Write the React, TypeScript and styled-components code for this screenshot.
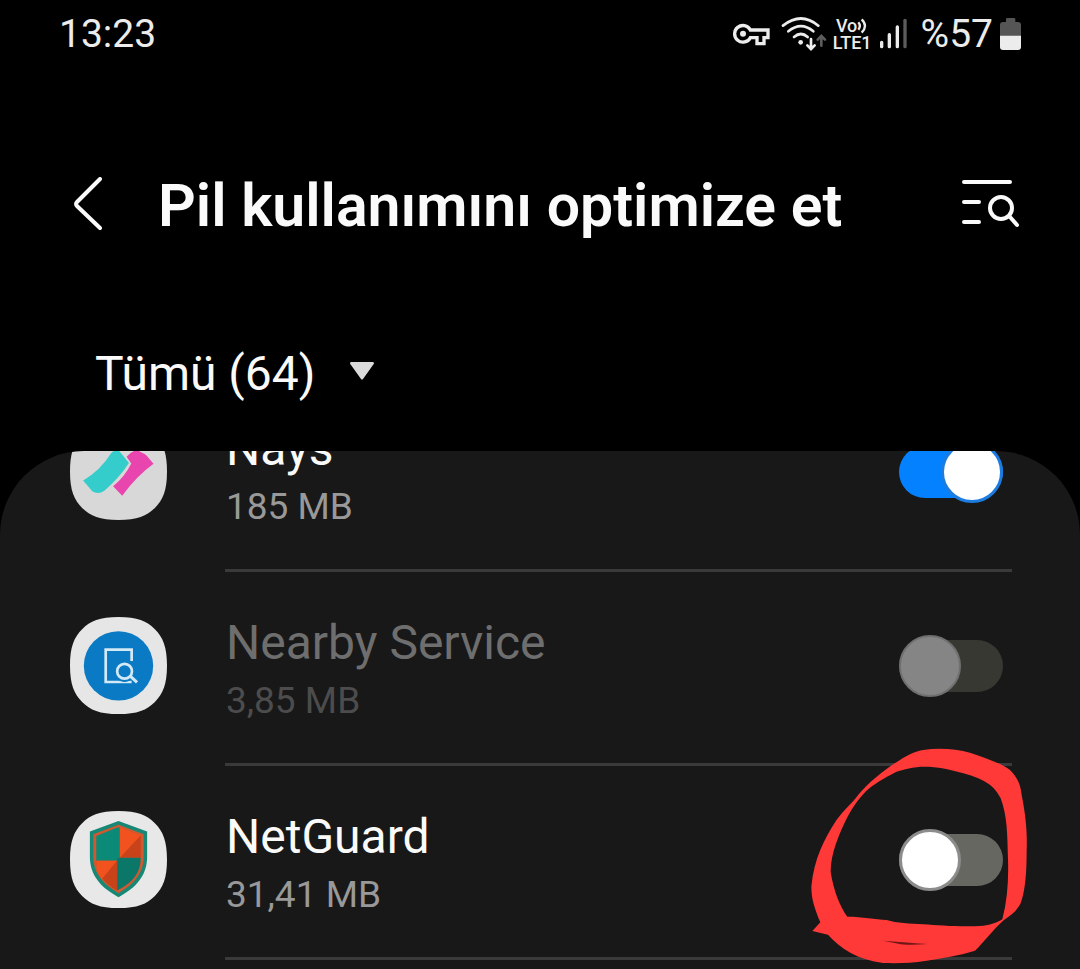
import React, {useState} from 'react';
import styled, {createGlobalStyle} from 'styled-components';

const SQUIRCLE = 'M144 0C200 0 228 12 252 36S288 88 288 144S276 228 252 252S200 288 144 288S60 276 36 252S0 200 0 144S12 60 36 36S88 0 144 0Z';

const NaysIcon = () => (
    <AppIcon viewBox="0 0 288 288" aria-hidden="true">
        <path d={SQUIRCLE} fill="#d8d8d8"/>
        <path d="M168 100Q192 74 208 85Q222 91 228 97L248 121Q198 157 155 216L128 188Q162 160 182 120Z" fill="#e845ae"/>
        <path d="M39 171Q90 141 122 90Q134 76 147 84L175 119Q144 166 102 201Q84 213 66 203Z" fill="#34cdcb"/>
    </AppIcon>
);

const NearbyIcon = () => (
    <AppIcon viewBox="0 0 288 288" aria-hidden="true">
        <path d={SQUIRCLE} fill="#e6e6e6"/>
        <circle cx="144" cy="145" r="103" fill="#0a7ac4"/>
        <g fill="none" stroke="#d3e9f5" strokeWidth="8">
            <path d="M183 131V97H106V193H183"/>
            <circle cx="162" cy="161" r="28" fill="#0a7ac4" stroke="#0a7ac4"/>
            <circle cx="162" cy="161" r="22"/>
            <path d="M178 175L199 194" strokeWidth="9"/>
        </g>
    </AppIcon>
);

const NetGuardIcon = () => (
    <AppIcon viewBox="0 0 288 288" aria-hidden="true">
        <path d={SQUIRCLE} fill="#e8e8e8"/>
        <path d="M144 30L229 61V136C229 190 198 227 144 256C90 227 59 190 59 136V61Z" fill="#188876"/>
        <path d="M144 41L219 69V136C219 184 190 217 144 244C98 217 69 184 69 136V69Z" fill="#cf5930"/>
        <path d="M78 147H140V236C100 215 78 185 78 147Z" fill="#c9431a"/>
        <path d="M78 147H140L94 203C82 185 78 168 78 147Z" fill="#f2521d"/>
        <path d="M148 49V139H140V147H78V74L140 49Z" fill="#0b8a78"/>
        <path d="M148 49V139L210 73Z" fill="#f2521d"/>
        <path d="M210 73V139H148Z" fill="#c9431a"/>
        <path d="M140 139H210C210 183 188 212 140 236Z" fill="#0a7768"/>
    </AppIcon>
);

const apps = [
    {id: 'nays', name: 'Nays', size: '185 MB', enabled: true, Icon: NaysIcon},
    {id: 'nearby', name: 'Nearby Service', size: '3,85 MB', enabled: false, disabled: true, Icon: NearbyIcon},
    {id: 'netguard', name: 'NetGuard', size: '31,41 MB', enabled: false, marked: true, Icon: NetGuardIcon},
];

const StatusIcons = () => (
    <StatusGroup>
        <StatusIcon $width={43} viewBox="36 48 129 108" aria-hidden="true">
            <path
                d="M91 90A25 25 0 1 0 91 113H111V131H132V113H144V90Z"
                fill="none" stroke="#ececec" strokeWidth="10"
            />
            <circle cx="69" cy="101" r="9" fill="#ececec"/>
        </StatusIcon>
        <StatusIcon $width={46} viewBox="186 48 138 108" aria-hidden="true">
            <g fill="none" stroke="#ececec" strokeWidth="8" strokeLinecap="round">
                <path d="M192 77Q246 34 298 77"/>
                <path d="M208 94Q246 63 283 94"/>
                <path d="M225 111Q246 93 266 111"/>
                <path d="M276 117V145M265 136L276 147L287 136"/>
                <path d="M307 137V109M296 119L307 108L318 119" stroke="#5c5c5c"/>
            </g>
            <circle cx="245" cy="127" r="7" fill="#ececec"/>
        </StatusIcon>
        <Network>
            <NetworkLine>
                Vo
                <svg width="11" height="18" viewBox="0 0 33 54" aria-hidden="true">
                    <path d="M4 16Q13 27 4 38M14 7Q34 27 14 47" fill="none" stroke="#ececec" strokeWidth="7"/>
                </svg>
            </NetworkLine>
            <NetworkLine>LTE1</NetworkLine>
        </Network>
        <StatusIcon $width={37} viewBox="474 48 111 108" aria-hidden="true">
            <g stroke="#ececec" strokeWidth="10" strokeLinecap="round">
                <path d="M485 127V140M508 104V140M532 81V140"/>
                <path d="M555 61V140" stroke="#5c5c5c"/>
            </g>
        </StatusIcon>
        <span>%57</span>
        <StatusIcon $width={23} viewBox="837 48 69 108" aria-hidden="true">
            <path d="M858 57Q858 54 862 54H882Q886 54 886 57V66H894Q903 66 903 75V108H840V75Q840 66 849 66H858Z" fill="#555"/>
            <path d="M840 107H903V141Q903 150 894 150H849Q840 150 840 141Z" fill="#ececec"/>
        </StatusIcon>
    </StatusGroup>
);

// hand drawn ring around a switch
const Scribble = () => (
    <ScribbleSvg viewBox="0 0 870 717" aria-hidden="true">
        <path
            fillRule="evenodd"
            fill="#ff3838"
            d="M400 60C450 52 500 58 540 68C580 82 630 97 660 120C685 145 692 168 695 195C708 260 712 310 710 360C710 430 706 480 692 520C678 546 662 556 642 570C606 602 582 637 555 662C510 676 460 684 410 692C360 700 320 700 280 699C205 690 150 655 114 614L67 603L91 577C76 540 64 510 64 470C72 385 104 325 138 272C165 234 185 222 205 194C235 158 290 113 330 90C350 76 375 64 400 60ZM405 110C370 110 340 118 318 126C280 146 250 163 228 184C200 213 190 230 172 262C150 305 122 370 122 425C130 480 150 530 172 560C220 560 255 568 290 570C320 580 360 580 400 583C450 587 530 592 580 587C605 584 620 578 637 568C652 510 656 450 654 390C652 310 652 260 632 205C608 155 560 142 520 130C480 118 440 110 405 110Z"
        />
        <path d="M280 632Q335 636 412 642Q350 647 325 641Z" fill="#6e1717"/>
    </ScribbleSvg>
);

function App() {
    const [enabled, setEnabled] = useState<Record<string, boolean>>(
        Object.fromEntries(apps.map(app => [app.id, app.enabled]))
    );

    const toggle = (id: string) => setEnabled(prev => ({...prev, [id]: !prev[id]}));

    return (
        <Page>
            <GlobalStyle/>
            <StatusBar>
                <span>13:23</span>
                <StatusIcons/>
            </StatusBar>

            <Header>
                <IconButton aria-label="Geri">
                    <svg width="28" height="54" viewBox="0 0 28 54" aria-hidden="true">
                        <path d="M26 2L3 25Q1 27 3 29L26 51" fill="none" stroke="#fafafa" strokeWidth="4" strokeLinecap="round"/>
                    </svg>
                </IconButton>
                <Title>Pil kullanımını optimize et</Title>
                <IconButton aria-label="Ara">
                    <svg width="60" height="50" viewBox="0 0 60 50" aria-hidden="true">
                        <g fill="none" stroke="#fafafa" strokeWidth="4" strokeLinecap="round">
                            <path d="M4 3H50M4 23H19M4 43H19"/>
                            <circle cx="41" cy="29" r="11"/>
                            <path d="M50 38L57 46"/>
                        </g>
                    </svg>
                </IconButton>
            </Header>

            <Filter>
                <FilterSelect aria-label="Filtre">
                    <option>Tümü (64)</option>
                </FilterSelect>
                <Caret viewBox="0 0 24 18" aria-hidden="true">
                    <path d="M1 0H23Q25 1 23 3L13 17Q12 18 11 17L1 3Q-1 1 1 0Z" fill="#dadada"/>
                </Caret>
            </Filter>

            <Panel>
                <AppList>
                    {apps.map(({id, name, size, disabled, marked, Icon}) => (
                        <AppRow key={id}>
                            <Icon/>
                            <RowBody>
                                <AppText htmlFor={id}>
                                    <AppName $disabled={disabled}>{name}</AppName>
                                    <AppSize $disabled={disabled}>{size}</AppSize>
                                </AppText>
                                <SwitchBox>
                                    <Switch
                                        id={id}
                                        type="checkbox"
                                        role="switch"
                                        checked={enabled[id]}
                                        disabled={disabled}
                                        onChange={() => toggle(id)}
                                    />
                                    {marked && <Scribble/>}
                                </SwitchBox>
                            </RowBody>
                        </AppRow>
                    ))}
                </AppList>
            </Panel>
        </Page>
    );
}

const GlobalStyle = createGlobalStyle`
  *, *::before {
    box-sizing: border-box;
  }

  body {
    margin: 0;
    background: #000000;
    color: #fafafa;
    font-family: Roboto, "Noto Sans", sans-serif;
  }
`;

const Page = styled.div`
  display: flex;
  flex-direction: column;
  height: 100vh;
  overflow: hidden;
`;

const StatusBar = styled.div`
  display: flex;
  flex-shrink: 0;
  align-items: center;
  justify-content: space-between;
  height: 68px;
  padding: 0 58px 0 59px;
  color: #ececec;
  font-size: 39px;
  line-height: 48px;
`;

const StatusGroup = styled.div`
  display: flex;
  align-items: center;
  gap: 6px;
`;

const StatusIcon = styled.svg<{$width: number}>`
  width: ${props => props.$width}px;
  height: 36px;
`;

const Network = styled.div`
  display: flex;
  flex-direction: column;
  align-items: center;
  width: 39px;
  font-size: 18px;
  font-weight: 500;
  line-height: 17px;
`;

const NetworkLine = styled.div`
  display: flex;
  align-items: center;
  height: 17px;
`;

const Header = styled.header`
  display: flex;
  flex-shrink: 0;
  align-items: center;
  padding: 102px 60px 102px 74px;
`;

const IconButton = styled.button`
  display: flex;
  padding: 0 0 4px;
  border: 0;
  background: none;
  cursor: pointer;
`;

const Title = styled.h1`
  flex: 1;
  margin: 0 0 0 56px;
  font-size: 59px;
  font-weight: 600;
  line-height: 72px;
`;

const Filter = styled.div`
  position: relative;
  flex-shrink: 0;
  align-self: flex-start;
  margin: 0 0 48px 95px;
`;

const FilterSelect = styled.select`
  display: block;
  height: 59px;
  padding: 0 58px 0 0;
  border: 0;
  appearance: none;
  background: none;
  color: #fafafa;
  font-family: inherit;
  font-size: 48px;
`;

const Caret = styled.svg`
  position: absolute;
  top: 18px;
  right: 0;
  width: 24px;
  height: 18px;
  pointer-events: none;
`;

const Panel = styled.main`
  flex: 1;
  overflow: hidden;
  border-radius: 84px 84px 0 0;
  background: #181818;
`;

// list is scrolled part way into its first row
const AppList = styled.ul`
  margin: -73px 0 0;
  padding: 0 68px 0 70px;
  list-style: none;
`;

const AppRow = styled.li`
  display: flex;
`;

const AppIcon = styled.svg`
  flex-shrink: 0;
  width: 97px;
  height: 97px;
  margin-top: 45px;
`;

const RowBody = styled.div`
  display: flex;
  flex: 1;
  align-items: flex-start;
  justify-content: space-between;
  height: 194px;
  margin-left: 58px;
  padding-right: 9px;
  border-bottom: 3px solid #3a3a3a;
`;

const AppText = styled.label`
  display: flex;
  flex-direction: column;
  gap: 8px;
  padding: 43px 0 0 1px;
`;

const AppName = styled.span<{$disabled?: boolean}>`
  color: ${props => props.$disabled ? '#6e6e6e' : '#fafafa'};
  font-size: 48px;
  line-height: 56px;
`;

const AppSize = styled.span<{$disabled?: boolean}>`
  color: ${props => props.$disabled ? '#4c4c4c' : '#999999'};
  font-size: 37px;
  line-height: 44px;
`;

const SwitchBox = styled.div`
  position: relative;
  margin-top: 68px;
`;

const Switch = styled.input`
  display: flex;
  align-items: center;
  width: 104px;
  height: 52px;
  margin: 0;
  appearance: none;
  border-radius: 26px;
  background: #666760;

  &::before {
    content: "";
    flex-shrink: 0;
    width: 62px;
    height: 62px;
    border: 3px solid #8c8c8c;
    border-radius: 50%;
    background: #ffffff;
  }

  &:checked {
    justify-content: flex-end;
    background: #0381fe;
  }

  &:checked::before {
    border-color: #1c7ce0;
  }

  &:disabled {
    background: #383832;
  }

  &:disabled::before {
    border-width: 2px;
    border-color: #707070;
    background: #858585;
  }
`;

const ScribbleSvg = styled.svg`
  position: absolute;
  top: -104px;
  left: -109px;
  z-index: 1;
  width: 290px;
  height: 239px;
  pointer-events: none;
`;

export default App;
